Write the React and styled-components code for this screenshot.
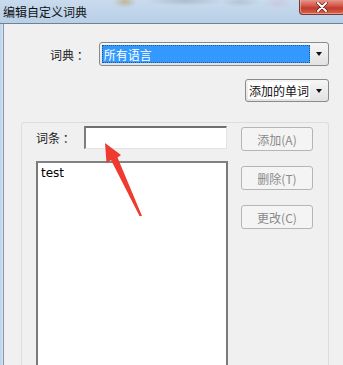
import React from "react";
import styled, { createGlobalStyle } from "styled-components";

const GlobalStyle = createGlobalStyle`
  html, body {
    margin: 0;
    padding: 0;
    background: #f0f0f0;
  }
  body {
    font-family: "Microsoft YaHei", "Noto Sans CJK SC", "Noto Sans", sans-serif;
    font-size: 12px;
    color: #000;
  }
`;

const Window = styled.div`
  position: relative;
  width: 343px;
  height: 365px;
  overflow: hidden;
  display: flex;
  flex-direction: column;
  background: #f0f0f0;
`;

const TitleBar = styled.div`
  position: relative;
  height: 23px;
  flex: none;
  display: flex;
  align-items: center;
  padding-left: 3px;
  border-bottom: 1px solid #6e8295;
  background:
    radial-gradient(ellipse 12px 6px at 125px 2px, rgba(190, 170, 130, 0.75), transparent),
    radial-gradient(ellipse 40px 5px at 185px 1px, rgba(150, 165, 180, 0.55), transparent),
    radial-gradient(ellipse 20px 5px at 240px 2px, rgba(160, 175, 190, 0.5), transparent),
    radial-gradient(ellipse 14px 6px at 278px 3px, rgba(205, 190, 215, 0.6), transparent),
    linear-gradient(to bottom, #c9dbed 0%, #bfd4ea 55%, #b8cfe7 100%);
`;

const Title = styled.span`
  font-size: 12px;
  color: #111;
  line-height: 1;
  margin-top: 1px;
`;

const CloseButton = styled.div`
  position: absolute;
  top: -1px;
  right: -2px;
  width: 44px;
  height: 15px;
  border: 1px solid #6d3a36;
  border-top: none;
  border-radius: 0 0 4px 4px;
  background: linear-gradient(to bottom, #e8a293 0%, #d2574a 45%, #c23a2b 60%, #d9664f 100%);
  box-shadow: inset 0 0 0 1px rgba(255, 220, 210, 0.45);
  display: flex;
  align-items: center;
  justify-content: center;
`;

const Frame = styled.div`
  flex: 1;
  display: flex;
  min-height: 0;
`;

const FrameEdge = styled.div`
  width: 3px;
  flex: none;
  background: linear-gradient(to right, #bcd2ea, #d3e2f2);
  border-right: 1px solid #8998a8;
`;

const Body = styled.div`
  flex: 1;
  display: flex;
  flex-direction: column;
  padding: 18px 14px 0 0;
  min-width: 0;
`;

const DictRow = styled.div`
  display: flex;
  align-items: center;
  padding-left: 46px;
  gap: 10px;
`;

const Label = styled.span`
  font-size: 12px;
  color: #1a1a1a;
  white-space: nowrap;
`;

const Combo = styled.div`
  display: flex;
  align-items: stretch;
  width: ${(p) => p.$width}px;
  height: ${(p) => p.$height}px;
  box-sizing: border-box;
  border: 1px solid #8a8a8a;
  border-radius: 3px;
  background: linear-gradient(to bottom, #f6f6f6, #e2e2e2);
  padding: 2px 0 2px 2px;
`;

const ComboValue = styled.div`
  flex: 1;
  display: flex;
  align-items: center;
  padding-left: ${(p) => (p.$selected ? 2 : 1)}px;
  font-size: 12px;
  white-space: nowrap;
  overflow: hidden;
  box-sizing: border-box;
  background: ${(p) => (p.$selected ? "#3399ff" : "#fff")};
  color: ${(p) => (p.$selected ? "#fff" : "#111")};
  outline: ${(p) => (p.$selected ? "1px dotted #1c5aa0" : "none")};
  outline-offset: -1px;
`;

const ComboArrow = styled.div`
  width: 18px;
  flex: none;
  display: flex;
  align-items: center;
  justify-content: center;
  &::after {
    content: "";
    border-left: 3.5px solid transparent;
    border-right: 3.5px solid transparent;
    border-top: 4px solid #111;
  }
`;

const FilterRow = styled.div`
  display: flex;
  justify-content: flex-end;
  margin-top: 13px;
`;

const GroupBox = styled.div`
  margin: 20px 0 0 17px;
  flex: 1;
  border: 1px solid #d5dfe5;
  border-bottom: none;
  border-radius: 3px 3px 0 0;
  display: grid;
  grid-template-columns: 192px 72px;
  column-gap: 13px;
  padding: 3px 0 0 14px;
  align-content: start;
`;

const EntryColumn = styled.div`
  display: flex;
  flex-direction: column;
`;

const EntryRow = styled.div`
  display: flex;
  align-items: center;
  gap: 9px;
  height: 23px;
`;

const TextInput = styled.div`
  width: 143px;
  height: 23px;
  box-sizing: border-box;
  background: #fff;
  border: 1px solid #e3e3e3;
  border-top: 2px solid #707070;
  border-left: 2px solid #7d7d7d;
`;

const ListBox = styled.div`
  margin-top: 12px;
  width: 192px;
  height: 220px;
  box-sizing: border-box;
  background: #fff;
  border: 2px solid #7a7a7a;
  border-top-color: #828282;
  padding: 3px;
  font-family: "Segoe UI", "DejaVu Sans", "Noto Sans", sans-serif;
  font-size: 12px;
`;

const ButtonColumn = styled.div`
  display: flex;
  flex-direction: column;
  gap: 15px;
  padding-top: 1px;
`;

const DisabledButton = styled.div`
  height: 24px;
  box-sizing: border-box;
  border: 1px solid #b5b5b5;
  border-radius: 3px;
  background: #f4f4f4;
  color: #8a8a8a;
  display: flex;
  align-items: center;
  justify-content: center;
  font-size: 12px;
`;

const Annotation = styled.svg`
  position: absolute;
  left: 0;
  top: 0;
  pointer-events: none;
`;

export default function App() {
  return (
    <>
      <GlobalStyle />
      <Window>
        <TitleBar>
          <Title>编辑自定义词典</Title>
          <CloseButton>
            <svg width="12" height="10" viewBox="0 0 12 10">
              <path
                d="M2 1 L10 9 M10 1 L2 9"
                stroke="#5a1a14"
                strokeWidth="3.2"
                strokeLinecap="round"
              />
              <path
                d="M2 1 L10 9 M10 1 L2 9"
                stroke="#fff"
                strokeWidth="2"
                strokeLinecap="round"
              />
            </svg>
          </CloseButton>
        </TitleBar>
        <Frame>
          <FrameEdge />
          <Body>
            <DictRow>
              <Label>词典 ：</Label>
              <Combo $width={230} $height={24}>
                <ComboValue $selected>所有语言</ComboValue>
                <ComboArrow />
              </Combo>
            </DictRow>
            <FilterRow>
              <Combo $width={84} $height={23}>
                <ComboValue>添加的单词</ComboValue>
                <ComboArrow />
              </Combo>
            </FilterRow>
            <GroupBox>
              <EntryColumn>
                <EntryRow>
                  <Label>词条 ：</Label>
                  <TextInput />
                </EntryRow>
                <ListBox>test</ListBox>
              </EntryColumn>
              <ButtonColumn>
                <DisabledButton>添加(A)</DisabledButton>
                <DisabledButton>删除(T)</DisabledButton>
                <DisabledButton>更改(C)</DisabledButton>
              </ButtonColumn>
            </GroupBox>
          </Body>
        </Frame>
        <Annotation width="343" height="365" viewBox="0 0 343 365">
          <path
            d="M105 143 L121 155 L117.5 157.5 L142 216 L139.5 216 L111 160 L106.5 163 Z"
            fill="#ef3b2f"
          />
        </Annotation>
      </Window>
    </>
  );
}
